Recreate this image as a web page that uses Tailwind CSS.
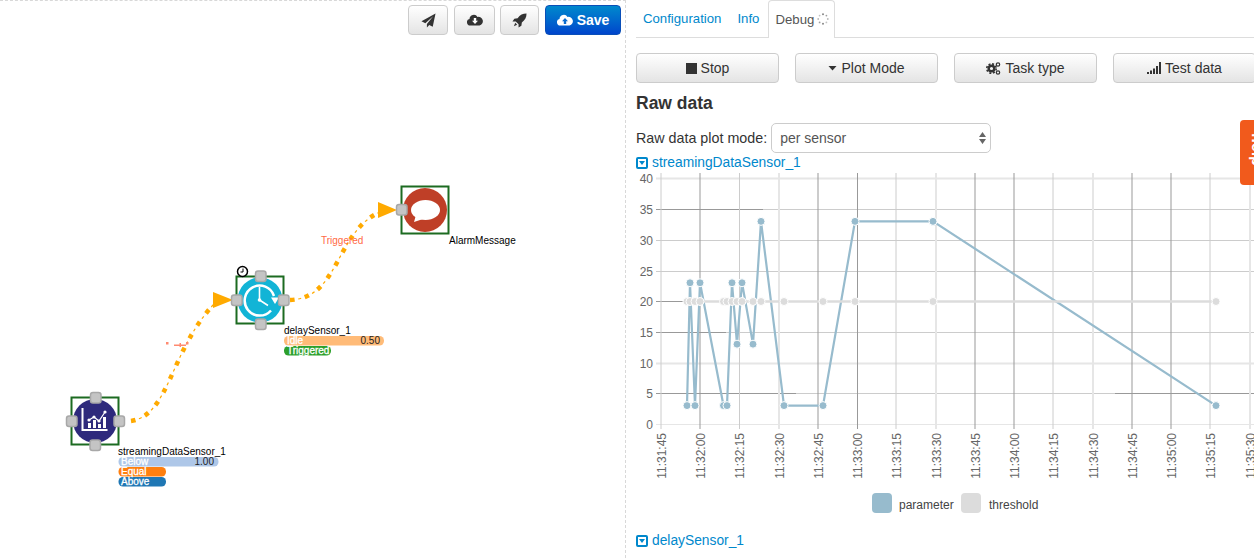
<!DOCTYPE html>
<html lang="en">
<head>
  <meta charset="UTF-8">
  <title>Workflow Editor</title>
  <script src="https://cdn.jsdelivr.net/npm/@tailwindcss/browser@4"></script>
</head>
<body class="bg-white overflow-hidden font-['Liberation_Sans',Arial,sans-serif] text-sm text-[#333]">
  <div class="flex w-[1254px] h-[558px] overflow-hidden relative">

    <!-- workflow canvas -->
    <div class="relative w-[626px] h-full shrink-0 border-t border-r border-dashed border-[#d8d8d8]">
      <svg class="absolute left-0 top-[-1px]" width="625" height="558" viewBox="0 0 625 558" font-family="Liberation Sans, Arial, sans-serif" font-size="10">
        <!-- edges -->
        <g fill="none" stroke="#ffaa00">
          <path d="M131 421 C170 415 170 350 215 303" stroke-width="4.5" stroke-dasharray="4.5 10.5"/>
          <path d="M131 421 C170 415 170 350 215 303" stroke-width="1.2" stroke-dasharray="3 12" stroke-dashoffset="-8.25"/>
          <path d="M290 300 C340 298 335 232 380 212" stroke-width="4.5" stroke-dasharray="4.5 10.5"/>
          <path d="M290 300 C340 298 335 232 380 212" stroke-width="1.2" stroke-dasharray="3 12" stroke-dashoffset="-8.25"/>
        </g>
        <polygon points="213,292 213,308 233,300" fill="#ffaa00"/>
        <polygon points="378,202 378,218 397,210" fill="#ffaa00"/>
        <g fill="#ff8a70">
          <rect x="166" y="342" width="2.5" height="2.5"/>
          <rect x="174" y="344.5" width="12" height="1.5"/>
          <rect x="179.500" y="343" width="1.5" height="4"/>
          <rect x="186" y="342" width="2.5" height="2.5"/>
        </g>
        <text x="321" y="243.500" fill="#ff6a45">Triggered</text>

        <!-- streamingDataSensor_1 -->
        <circle cx="95" cy="421" r="22" fill="#2e2a7c"/>
        <rect x="71.500" y="397.500" width="47" height="47" fill="none" stroke="#1c6b21" stroke-width="2"/>
        <g fill="none" stroke="#fff">
          <path d="M82.500 408 V430 H107.500" stroke-width="2"/>
          <path d="M89 420 L94 417 L99 421 L105 412" stroke-width="1.200"/>
        </g>
        <g fill="#fff">
          <rect x="88" y="423" width="3" height="5"/>
          <rect x="93" y="420" width="3" height="8"/>
          <rect x="98" y="424" width="3" height="4"/>
          <rect x="103" y="417" width="3" height="11"/>
          <circle cx="89" cy="420" r="1.600"/>
          <circle cx="94" cy="417" r="1.600"/>
          <circle cx="99" cy="421" r="1.600"/>
          <circle cx="105" cy="412" r="1.600"/>
        </g>
        <g fill="#c4c4c4" stroke="#a8a8a8" stroke-width="1.500">
          <rect x="90.500" y="392.500" width="10.500" height="10.500" rx="2.500"/>
          <rect x="114" y="416" width="10.500" height="10.500" rx="2.500"/>
          <rect x="90" y="440" width="10.500" height="10.500" rx="2.500"/>
          <rect x="66.500" y="416" width="10.500" height="10.500" rx="2.500"/>
        </g>
        <text x="118" y="455" fill="#000">streamingDataSensor_1</text>
        <rect x="118.500" y="457" width="100" height="9.500" rx="4.500" fill="#aec7e8"/>
        <rect x="118.500" y="467" width="47.500" height="9.500" rx="4.500" fill="#ff7f0e"/>
        <rect x="118.500" y="477" width="47.500" height="9.500" rx="4.500" fill="#1f77b4"/>
        <g fill="#fff" stroke="#fff" stroke-width=".3">
          <text x="121" y="465">Below</text>
          <text x="121" y="475">Equal</text>
          <text x="121" y="485">Above</text>
        </g>
        <text x="214" y="465" fill="#222" text-anchor="end">1.00</text>

        <!-- delaySensor_1 -->
        <circle cx="260" cy="300" r="22.500" fill="#12b4d6"/>
        <rect x="236.500" y="276.500" width="47" height="47" fill="none" stroke="#1c6b21" stroke-width="2"/>
        <path d="M274 296 A15 15 0 1 0 271 310.500" fill="none" stroke="#fff" stroke-width="2.500"/>
        <polygon points="271,297.500 279,297.500 275,304" fill="#fff"/>
        <path d="M259.500 287 V300 L268 305.500" fill="none" stroke="#fff" stroke-width="1.600"/>
        <circle cx="259.500" cy="300" r="1.800" fill="#fff"/>
        <g fill="#c4c4c4" stroke="#a8a8a8" stroke-width="1.500">
          <rect x="255.500" y="271" width="10.500" height="10.500" rx="2.500"/>
          <rect x="278.500" y="295" width="10.500" height="10.500" rx="2.500"/>
          <rect x="255.500" y="319" width="10.500" height="10.500" rx="2.500"/>
          <rect x="231.500" y="295" width="10.500" height="10.500" rx="2.500"/>
        </g>
        <circle cx="242.500" cy="271.500" r="5" fill="#fff" stroke="#000" stroke-width="1.500"/>
        <path d="M243 268.500 V272 H240.500" fill="none" stroke="#000"/>
        <text x="284" y="334" fill="#000">delaySensor_1</text>
        <rect x="284" y="336" width="100" height="9.500" rx="4.500" fill="#ffbb78"/>
        <rect x="284" y="346" width="47" height="9.500" rx="4.500" fill="#2ca02c"/>
        <g fill="#fff" stroke="#fff" stroke-width=".3">
          <text x="287" y="344">Idle</text>
          <text x="287" y="354">Triggered</text>
        </g>
        <text x="380" y="344" fill="#222" text-anchor="end">0.50</text>

        <!-- AlarmMessage -->
        <circle cx="425" cy="210" r="22" fill="#bf3f27"/>
        <rect x="401.500" y="186.500" width="47" height="47" fill="none" stroke="#1c6b21" stroke-width="2"/>
        <ellipse cx="425.500" cy="210" rx="14.500" ry="10" fill="#fff"/>
        <path d="M416 215 L414 222 L423 219 Z" fill="#fff"/>
        <rect x="396.500" y="204.500" width="10.500" height="10.500" rx="2.500" fill="#c4c4c4" stroke="#a8a8a8" stroke-width="1.500"/>
        <text x="449" y="244" fill="#000">AlarmMessage</text>
      </svg>

      <!-- toolbar -->
      <div class="relative flex justify-end pt-[4px] pr-[4px]">
        <button class="flex items-center justify-center w-[40px] h-[30px] rounded-[4px] border border-[#ccc] bg-linear-to-b from-white to-[#e4e4e4]">
          <svg width="15" height="15" viewBox="0 0 16 16" fill="#333"><path d="M15.500 .5 L.5 8.800 L4.600 10.800 L13 3.500 L6.300 11.600 V15.500 L8.800 12.800 L12.500 14.600 Z"/></svg>
        </button>
        <button class="flex items-center justify-center ml-[6px] w-[41px] h-[30px] rounded-[4px] border border-[#ccc] bg-linear-to-b from-white to-[#e4e4e4]">
          <svg width="16" height="12" viewBox="0 0 16 12" fill="#333"><path d="M3.500 11.500 A3.300 3.300 0 0 1 2.500 5 A4.300 4.300 0 0 1 10.500 3 A4.200 4.200 0 0 1 12.500 11.500 Z"/><path d="M6.800 4 H9.200 V6.800 H11 L8 10 L5 6.800 H6.800 Z" fill="#fff"/></svg>
        </button>
        <button class="flex items-center justify-center ml-[5px] w-[39px] h-[30px] rounded-[4px] border border-[#ccc] bg-linear-to-b from-white to-[#e4e4e4]">
          <svg width="15" height="15" viewBox="0 0 16 16" fill="#333"><path d="M15.500 .5 C11.500 .5 8.500 2 6 5.500 L2.500 6 L.5 9 L4 9 L7 12 L7 15.500 L10 13.500 L10.500 10 C14 7.500 15.500 4.500 15.500 .5 Z"/><path d="M3.500 10.500 L5.500 12.500 L2 14 Z"/></svg>
        </button>
        <button class="flex items-center justify-center gap-[4px] ml-[6px] w-[76px] h-[30px] rounded-[4px] border border-[#0a4fb8] bg-linear-to-b from-[#0088cc] to-[#0044cc] text-white font-bold">
          <svg width="16" height="12" viewBox="0 0 16 12" fill="#fff"><path d="M3.500 11.500 A3.300 3.300 0 0 1 2.500 5 A4.300 4.300 0 0 1 10.500 3 A4.200 4.200 0 0 1 12.500 11.500 Z"/><path d="M6.800 10 H9.200 V7.200 H11 L8 4 L5 7.200 H6.800 Z" fill="#0a6ccf"/></svg>
          Save
        </button>
      </div>
    </div>

    <!-- right panel -->
    <div class="flex-1 min-w-0 pl-[10px] overflow-hidden">
      <div class="flex h-[38px] w-[700px] border-b border-[#ddd] pl-[7px] text-[13.2px]">
        <a class="pt-[10px] text-[#0088cc] leading-[17px]">Configuration</a>
        <a class="pt-[10px] ml-[16px] text-[#0088cc] leading-[17px]">Info</a>
        <div class="flex items-start gap-[3px] ml-[9px] h-[38px] w-[67px] pl-[6px] pt-[10px] border border-b-0 border-[#ddd] rounded-t-[4px] bg-white text-[#555] leading-[17px]">
          Debug
          <svg class="mt-[2px]" width="12" height="12" viewBox="0 0 12 12" fill="#888">
            <circle cx="6" cy="1.200" r="1"/><circle cx="9.400" cy="2.600" r=".9" opacity=".8"/><circle cx="10.800" cy="6" r=".9" opacity=".6"/><circle cx="9.400" cy="9.400" r=".9" opacity=".5"/><circle cx="6" cy="10.800" r="1"/><circle cx="2.600" cy="9.400" r=".9" opacity=".8"/><circle cx="1.200" cy="6" r=".9" opacity=".6"/><circle cx="2.600" cy="2.600" r=".9" opacity=".5"/>
          </svg>
        </div>
      </div>

      <div class="flex gap-[16px] w-[700px] mt-[15px]">
        <button class="flex items-center justify-center gap-[4px] w-[143px] h-[30px] rounded-[4px] border border-[#ccc] bg-linear-to-b from-white to-[#e4e4e4]">
          <span class="w-[11px] h-[11px] bg-[#333]"></span>Stop
        </button>
        <button class="flex items-center justify-center gap-[4px] w-[143px] h-[30px] rounded-[4px] border border-[#ccc] bg-linear-to-b from-white to-[#e4e4e4]">
          <svg width="9" height="5" viewBox="0 0 9 5" fill="#333"><path d="M.5 0 H8.500 L4.500 4.500 Z"/></svg>Plot Mode
        </button>
        <button class="flex items-center justify-center gap-[4px] w-[143px] h-[30px] rounded-[4px] border border-[#ccc] bg-linear-to-b from-white to-[#e4e4e4]">
          <svg width="15" height="13" viewBox="0 0 15 13" fill="none" stroke="#333">
            <circle cx="5.500" cy="6.500" r="2.800" stroke-width="2.400"/>
            <circle cx="5.500" cy="6.500" r="4.700" stroke-width="1.600" stroke-dasharray="2 1.700"/>
            <circle cx="12" cy="2.500" r="1.700" stroke-width="1.200"/>
            <circle cx="12" cy="10.500" r="1.700" stroke-width="1.200"/>
          </svg>Task type
        </button>
        <button class="flex items-center justify-center gap-[4px] w-[143px] h-[30px] rounded-[4px] border border-[#ccc] bg-linear-to-b from-white to-[#e4e4e4]">
          <svg width="14" height="12" viewBox="0 0 14 12" fill="#333"><rect x="0" y="10" width="2" height="2"/><rect x="3" y="8.500" width="2" height="3.500"/><rect x="6" y="6.500" width="2" height="5.500"/><rect x="9" y="4" width="2" height="8"/><rect x="12" y="0" width="2" height="12"/></svg>Test data
        </button>
      </div>

      <h2 class="mt-[9px] text-[17.5px] leading-[22px] font-bold text-[#333]">Raw data</h2>

      <div class="flex items-center gap-[4px] mt-[9px] h-[30px]">
        <span class="text-[14.3px]">Raw data plot mode:</span>
        <div class="flex items-center justify-between w-[220px] h-[30px] pl-[8px] pr-[4px] rounded-[5px] border border-[#ccc] text-[#555]">
          per sensor
          <svg width="7" height="12" viewBox="0 0 7 12" fill="#666"><path d="M3.500 0 L7 5 H0 Z M0 7 H7 L3.500 12 Z"/></svg>
        </div>
      </div>

      <a class="flex items-center gap-[4px] mt-[1px] h-[18px] text-[13.8px] text-[#0088cc]">
        <span class="flex items-center justify-center w-[12px] h-[12px] rounded-[2px] border-2 border-[#0088cc]">
          <span class="w-0 h-0 border-x-[3px] border-x-transparent border-t-[4px] border-t-[#0088cc]"></span>
        </span>
        streamingDataSensor_1
      </a>

      <svg id="chart" class="block" width="618" height="360" viewBox="636 172 618 360" font-family="Liberation Sans, Arial, sans-serif" font-size="12"></svg>

      <a class="flex items-center gap-[4px] h-[18px] text-[13.8px] text-[#0088cc]">
        <span class="flex items-center justify-center w-[12px] h-[12px] rounded-[2px] border-2 border-[#0088cc]">
          <span class="w-0 h-0 border-x-[3px] border-x-transparent border-t-[4px] border-t-[#0088cc]"></span>
        </span>
        delaySensor_1
      </a>
    </div>

    <!-- help tab, hangs over the panel edge -->
    <div class="absolute right-0 top-[120px] flex justify-start w-[14px] h-[65px] overflow-hidden rounded-l-[4px] bg-[#f15a1c] pt-[13px] pl-[7px]">
      <span class="[writing-mode:vertical-rl] text-white font-bold text-[16px] leading-[20px]">help</span>
    </div>
  </div>

  <script>
    const chart = document.getElementById('chart');
    const DARK = ['#999', 1], LIGHT = ['#ccc', 1], SOFT = ['#e6e6e6', 2];
    const yOf = v => 424 - v * 6.14;

    function add(tag, attrs, text) {
      const el = document.createElementNS('http://www.w3.org/2000/svg', tag);
      for (const k in attrs) el.setAttribute(k, attrs[k]);
      if (text) el.textContent = text;
      chart.appendChild(el);
    }
    function hline(y, x1, x2, style) {
      add('line', { x1, x2, y1: y, y2: y, stroke: style[0], 'stroke-width': style[1] });
    }

    // horizontal grid: [value, segments]
    const rows = [
      [40, [[656, 1254, SOFT]]],
      [35, [[656, 763, DARK], [763, 1254, LIGHT]]],
      [30, [[656, 1254, LIGHT]]],
      [25, [[656, 1254, LIGHT]]],
      [20, [[656, 690, DARK]]],
      [15, [[656, 726, DARK], [726, 1254, LIGHT]]],
      [10, [[656, 1254, SOFT]]],
      [5,  [[656, 796, DARK], [796, 1115, LIGHT], [1115, 1254, DARK]]],
      [0,  [[656, 1254, ['#e6e6e6', 1]]]]
    ];
    rows.forEach(([v, segs]) => {
      const y = Math.round(yOf(v)) + 0.5;
      segs.forEach(([a, b, s]) => hline(y, a, b, s));
      add('text', { x: 653, y: y + 4.5, 'text-anchor': 'end', fill: '#666' }, String(v));
    });

    // vertical grid + rotated time labels
    const times = [
      ['11:31:45', 661, LIGHT], ['11:32:00', 700, DARK], ['11:32:15', 739.5, LIGHT], ['11:32:30', 779, SOFT],
      ['11:32:45', 818, DARK], ['11:33:00', 857.5, DARK], ['11:33:15', 896, LIGHT], ['11:33:30', 936, SOFT],
      ['11:33:45', 975, DARK], ['11:34:00', 1014, DARK], ['11:34:15', 1053, LIGHT], ['11:34:30', 1093, SOFT],
      ['11:34:45', 1132, DARK], ['11:35:00', 1171, DARK], ['11:35:15', 1210, LIGHT], ['11:35:30', 1250, SOFT]
    ];
    times.forEach(([label, x, s]) => {
      add('line', { x1: x, x2: x, y1: 173, y2: 429, stroke: s[0], 'stroke-width': s[1] });
      add('text', { transform: `translate(${x + 4.5} 433) rotate(-90)`, 'text-anchor': 'end', fill: '#666' }, label);
    });

    // x position and value of each sample
    const samples = [[687, 3], [690, 23], [695, 3], [700, 23], [723.500, 3], [727, 3], [732, 23], [737, 13], [742, 23], [753, 13], [761, 33], [784, 3], [823, 3], [855, 33], [933, 33], [1216, 3]];

    function series(points, colour, width) {
      add('polyline', { points: points.map(p => p.join(',')).join(' '), fill: 'none', stroke: colour, 'stroke-width': width });
      points.forEach(p => add('circle', { cx: p[0], cy: p[1], r: 4, fill: colour, stroke: '#fff', 'stroke-width': 1 }));
    }
    series(samples.map(([x, v]) => [x, yOf(v)]), '#97bbcd', 2.2);
    series(samples.map(([x]) => [x, 301.500]), '#dcdcdc', 2.5);

    // legend
    add('rect', { x: 872, y: 493, width: 20, height: 20, rx: 4, fill: '#97bbcd' });
    add('text', { x: 899, y: 509, fill: '#444', 'font-size': 12 }, 'parameter');
    add('rect', { x: 961, y: 493, width: 20, height: 20, rx: 4, fill: '#dcdcdc' });
    add('text', { x: 989, y: 509, fill: '#444', 'font-size': 12 }, 'threshold');
  </script>
</body>
</html>
